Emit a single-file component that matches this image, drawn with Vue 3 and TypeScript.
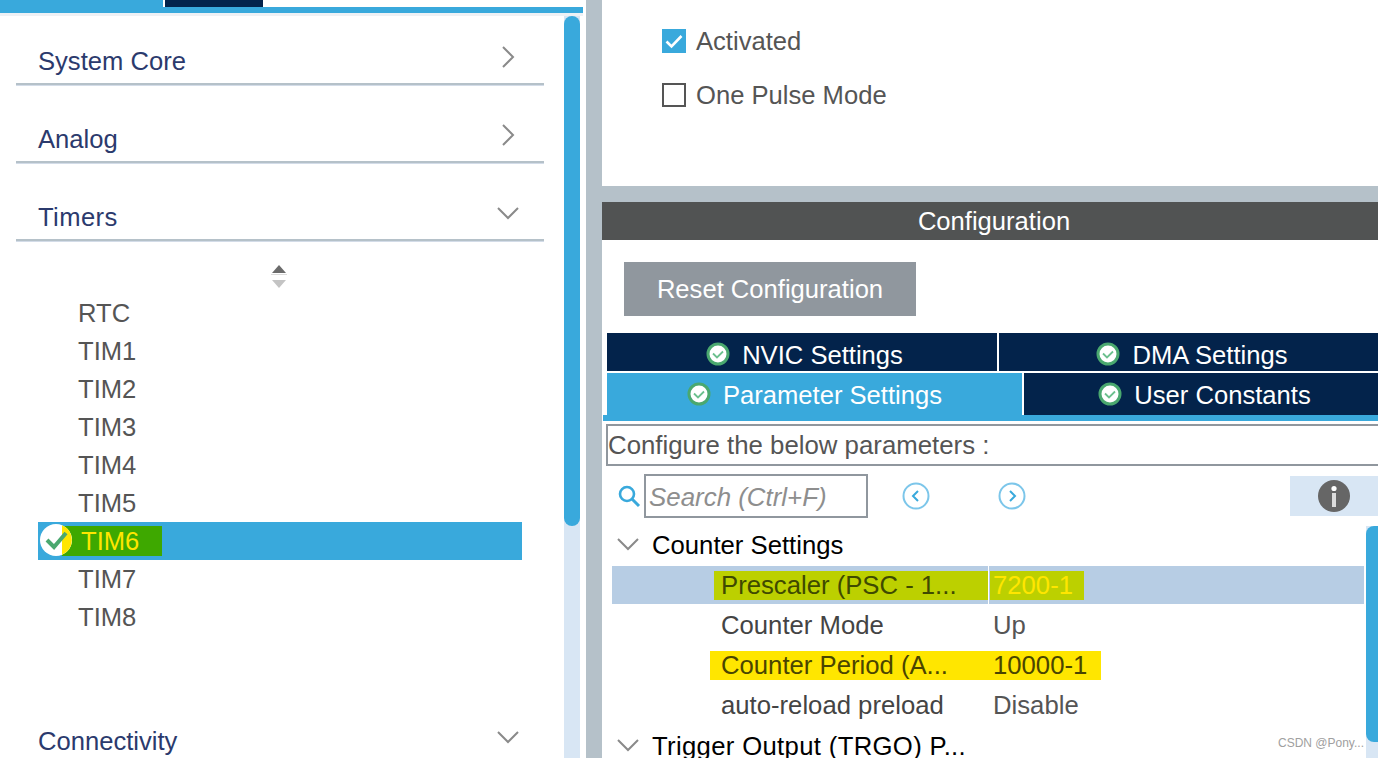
<script setup lang="ts">
const timers = ['RTC', 'TIM1', 'TIM2', 'TIM3', 'TIM4', 'TIM5', 'TIM6', 'TIM7', 'TIM8']
</script>

<template>
  <div class="page">
    <aside class="left">
      <div class="cat-tabs">
        <div class="cat-tab active"><span>Categories</span></div>
        <div class="cat-tab dark"></div>
      </div>
      <div class="cat-line"></div>
      <div class="left-body">
        <div class="list">
          <div class="section">
            <span>System Core</span>
            <svg class="chev-r" width="14" height="24" viewBox="0 0 14 24"><path d="M2 2l10 10L2 22" /></svg>
          </div>
          <div class="section">
            <span>Analog</span>
            <svg class="chev-r" width="14" height="24" viewBox="0 0 14 24"><path d="M2 2l10 10L2 22" /></svg>
          </div>
          <div class="section">
            <span class="wide">Timers</span>
            <svg class="chev-d" width="22" height="14" viewBox="0 0 22 14"><path d="M1 2l10 10L21 2" /></svg>
          </div>
          <div class="sorter">
            <svg width="18" height="24" viewBox="0 0 18 24">
              <path d="M9 0l7 8H2z" fill="#6b6b6b" />
              <path d="M1 9h16v1H1z" fill="#dcdcdc" />
              <path d="M2 15h14l-7 8z" fill="#c4c4c4" />
            </svg>
          </div>
          <ul class="items">
            <li v-for="t in timers" :key="t" :class="{ selected: t === 'TIM6' }">
              <template v-if="t === 'TIM6'">
                <svg class="sel-check" width="34" height="36" viewBox="0 0 34 36">
                  <circle cx="17" cy="18" r="16" fill="#fff" />
                  <path d="M23 3.2A16 16 0 0 1 23 32.8z" fill="#ffe600" />
                  <path d="M8 18l7 7L27 11" fill="none" stroke="#4aa86f" stroke-width="4" />
                </svg>
                <span class="sel-mark">{{ t }}</span>
              </template>
              <template v-else>{{ t }}</template>
            </li>
          </ul>
          <div class="section connectivity">
            <span>Connectivity</span>
            <svg class="chev-d" width="22" height="14" viewBox="0 0 22 14"><path d="M1 2l10 10L21 2" /></svg>
          </div>
        </div>
        <div class="scroll left-scroll"><div class="thumb"></div></div>
      </div>
    </aside>

    <div class="gutter"></div>

    <main class="right">
      <section class="mode">
        <label class="opt">
          <span class="box on">
            <svg width="24" height="24" viewBox="0 0 24 24"><path d="M4.5 12.5l5 5L19.5 7" fill="none" stroke="#fff" stroke-width="2.6" /></svg>
          </span>
          Activated
        </label>
        <label class="opt">
          <span class="box"></span>
          One Pulse Mode
        </label>
      </section>

      <div class="band"></div>
      <header class="conf-head">Configuration</header>

      <section class="conf">
        <button class="reset">Reset Configuration</button>

        <div class="tabs-row first">
          <div class="tab w1">
            <svg class="ok" width="24" height="24" viewBox="0 0 24 24"><circle cx="12" cy="12" r="10" fill="#fff" stroke="#4aa86f" stroke-width="3" /><path d="M7 11.5l4 4 6-6" fill="none" stroke="#6cc08e" stroke-width="1.8" /></svg>
            <span class="tab-text">NVIC Settings</span>
          </div>
          <div class="tab w2">
            <svg class="ok" width="24" height="24" viewBox="0 0 24 24"><circle cx="12" cy="12" r="10" fill="#fff" stroke="#4aa86f" stroke-width="3" /><path d="M7 11.5l4 4 6-6" fill="none" stroke="#6cc08e" stroke-width="1.8" /></svg>
            <span class="tab-text">DMA Settings</span>
          </div>
        </div>
        <div class="tabs-row second">
          <div class="tab w3 current">
            <svg class="ok" width="24" height="24" viewBox="0 0 24 24"><circle cx="12" cy="12" r="10" fill="#fff" stroke="#4aa86f" stroke-width="3" /><path d="M7 11.5l4 4 6-6" fill="none" stroke="#6cc08e" stroke-width="1.8" /></svg>
            <span class="tab-text">Parameter Settings</span>
          </div>
          <div class="tab w4">
            <svg class="ok" width="24" height="24" viewBox="0 0 24 24"><circle cx="12" cy="12" r="10" fill="#fff" stroke="#4aa86f" stroke-width="3" /><path d="M7 11.5l4 4 6-6" fill="none" stroke="#6cc08e" stroke-width="1.8" /></svg>
            <span class="tab-text">User Constants</span>
          </div>
        </div>
        <div class="tab-line"></div>

        <div class="hint">Configure the below parameters :</div>

        <div class="search-row">
          <svg class="lens" width="24" height="24" viewBox="0 0 24 24"><circle cx="10" cy="10" r="7" fill="none" stroke="#39a9dc" stroke-width="2.6" /><path d="M15 15l7 7" stroke="#39a9dc" stroke-width="3" /></svg>
          <div class="search">Search (Ctrl+F)</div>
          <svg class="nav prev" width="28" height="28" viewBox="0 0 28 28"><circle cx="14" cy="14" r="12.5" fill="none" stroke="#7cc6ea" stroke-width="2" /><path d="M16 9l-5 5 5 5" fill="none" stroke="#39a9dc" stroke-width="2" /></svg>
          <svg class="nav next" width="28" height="28" viewBox="0 0 28 28"><circle cx="14" cy="14" r="12.5" fill="none" stroke="#7cc6ea" stroke-width="2" /><path d="M12 9l5 5-5 5" fill="none" stroke="#39a9dc" stroke-width="2" /></svg>
          <div class="info">
            <svg width="32" height="32" viewBox="0 0 32 32"><circle cx="16" cy="16" r="16" fill="#666" /><circle cx="16" cy="8.5" r="2.6" fill="#fff" /><path d="M14 13h4v14h-4z" fill="#dcdcdc" /></svg>
          </div>
        </div>

        <div class="tree-wrap">
          <div class="tree">
            <div class="group">
              <svg class="chev-t" width="22" height="14" viewBox="0 0 22 14"><path d="M1 2l10 10L21 2" /></svg>
              Counter Settings
            </div>
            <div class="row picked">
              <div class="mark green name-mark"><span>Prescaler (PSC - 1...</span></div>
              <div class="mark green val-mark">7200-1</div>
            </div>
            <div class="row plain"><span class="name">Counter Mode</span><span class="val">Up</span></div>
            <div class="row period">
              <div class="mark yellow"><span class="name">Counter Period (A...</span><span class="val">10000-1</span></div>
            </div>
            <div class="row plain"><span class="name">auto-reload preload</span><span class="val">Disable</span></div>
            <div class="group trigger">
              <svg class="chev-t" width="22" height="14" viewBox="0 0 22 14"><path d="M1 2l10 10L21 2" /></svg>
              Trigger Output (TRGO) P...
            </div>
          </div>
          <div class="scroll tree-scroll"><div class="thumb"></div></div>
        </div>
      </section>
    </main>

    <div class="watermark">CSDN @Pony...</div>
  </div>
</template>

<style>
html, body {
  margin: 0;
  background: #fff;
}
</style>

<style scoped>
.page {
  position: relative;
  display: flex;
  width: 1378px;
  height: 758px;
  overflow: hidden;
  font-family: "Liberation Sans", Arial, sans-serif;
  font-size: 25.6px;
  color: #555;
}

/* left pane */
.left {
  width: 586px;
  flex: none;
  display: flex;
  flex-direction: column;
}
.cat-tabs {
  display: flex;
  height: 7px;
  gap: 2px;
}
.cat-tab {
  width: 163px;
  overflow: hidden;
  color: #fff;
  line-height: 0;
  text-align: center;
}
.cat-tab span {
  display: block;
  margin-top: -15px;
}
.cat-tab.active {
  background: #39a9dc;
}
.cat-tab.dark {
  width: 98px;
  background: #03234b;
}
.cat-line {
  width: 583px;
  height: 6px;
  background: #39a9dc;
  border-bottom: 3px solid #eef1f5;
}
.left-body {
  flex: 1;
  display: flex;
  min-height: 0;
}
.list {
  width: 564px;
  flex: none;
}
.section {
  display: flex;
  align-items: center;
  justify-content: space-between;
  box-sizing: border-box;
  height: 38px;
  margin: 31px 0 0 16px;
  width: 528px;
  padding: 0 28px 8px 22px;
  color: #2b3a6d;
  border-bottom: 2px solid #b5c1c9;
  box-shadow: 0 1px 0 #d3dce8;
}
.section + .section {
  margin-top: 40px;
}
.wide {
  letter-spacing: 0.4px;
}
.chev-r,
.chev-d,
.chev-t {
  fill: none;
  stroke: #8a8a8a;
  stroke-width: 2;
}
.chev-r {
  margin-right: 1px;
  margin-top: -9px;
}
.chev-d {
  margin-right: -3px;
  margin-top: -9px;
}
.sorter {
  display: flex;
  justify-content: center;
  margin-right: 6px;
  height: 24px;
  margin-top: 24px;
}
.items {
  list-style: none;
  margin: 5px 0 0;
  padding: 0;
}
.items li {
  height: 38px;
  line-height: 38px;
  padding-left: 78px;
}
.items li.selected {
  display: flex;
  align-items: center;
  width: 484px;
  margin-left: 38px;
  padding-left: 1px;
  box-sizing: border-box;
  background: #39a9dc;
}
.sel-check {
  position: relative;
  z-index: 1;
  flex: none;
  margin-top: -2px;
}
.sel-mark {
  margin-left: -11px;
  width: 100px;
  height: 30px;
  line-height: 31px;
  padding-left: 19px;
  box-sizing: border-box;
  background: #3ea800;
  color: #ffe600;
}
.section.connectivity {
  margin-top: 91px;
}
.scroll {
  background: #d8e6f4;
}
.thumb {
  background: #39a9dc;
}
.left-scroll {
  width: 16px;
  flex: none;
}
.left-scroll .thumb {
  height: 510px;
  border-radius: 8px;
}

.gutter {
  width: 16px;
  flex: none;
  background: #b5c1c9;
}

/* right pane */
.right {
  flex: 1;
  min-width: 0;
  display: flex;
  flex-direction: column;
}
.mode {
  height: 186px;
  padding: 14px 0 0 60px;
  box-sizing: border-box;
}
.opt {
  display: flex;
  align-items: center;
  height: 54px;
  gap: 10px;
}
.box {
  width: 24px;
  height: 24px;
  box-sizing: border-box;
  border: 2px solid #555;
}
.box.on {
  border: 0;
  background: #39a9dc;
}
.box svg {
  display: block;
}
.band {
  height: 16px;
  background: #b5c1c9;
}
.conf-head {
  height: 38px;
  line-height: 38px;
  text-align: center;
  padding-left: 8px;
  background: #515353;
  color: #fff;
}
.conf {
  flex: 1;
  min-height: 0;
  display: flex;
  flex-direction: column;
}
.reset {
  align-self: flex-start;
  margin: 22px 0 0 22px;
  width: 292px;
  height: 54px;
  border: 0;
  padding: 0;
  background: #90979e;
  color: #fff;
  font: inherit;
}
.tabs-row {
  display: flex;
  gap: 2px;
  margin-left: 5px;
  color: #fff;
}
.tabs-row.first {
  height: 38px;
  margin-top: 17px;
}
.tabs-row.first .tab {
  box-sizing: border-box;
  padding-top: 4px;
}
.tab-text {
  position: relative;
  top: 1px;
}
.tabs-row.second {
  height: 42px;
  margin-top: 2px;
}
.tab {
  display: flex;
  align-items: center;
  justify-content: center;
  gap: 12px;
  padding-left: 5px;
  background: #03234b;
}
.w1 { width: 390px; }
.w2 { flex: 1; padding-left: 7px; }
.w3 { width: 415px; }
.w4 { flex: 1; padding-left: 7px; }
.tab.current {
  background: #39a9dc;
  height: 48px;
  position: relative;
  z-index: 1;
  padding: 0 0 6px;
  box-sizing: border-box;
}
.ok {
  flex: none;
}
.tab-line {
  height: 6px;
  margin-left: 1px;
  background: #39a9dc;
}
.hint {
  height: 42px;
  line-height: 38px;
  margin: 3px 0 0 4px;
  box-sizing: border-box;
  border: 2px solid #90979e;
  border-right: 0;
  font-size: 25.8px;
}
.search-row {
  display: flex;
  align-items: center;
  height: 44px;
  margin-top: 8px;
}
.lens {
  margin-left: 15px;
  flex: none;
}
.search {
  margin-left: 3px;
  width: 224px;
  height: 44px;
  line-height: 42px;
  box-sizing: border-box;
  border: 2px solid #90979e;
  padding-left: 3px;
  color: #8e8e8e;
  font-style: italic;
  font-size: 25.9px;
}
.nav {
  flex: none;
}
.prev {
  margin-left: 34px;
}
.next {
  margin-left: 68px;
}
.info {
  margin-left: 264px;
  width: 88px;
  height: 40px;
  display: flex;
  align-items: center;
  justify-content: center;
  background: #d8e6f4;
}
.tree-wrap {
  flex: 1;
  min-height: 0;
  display: flex;
  margin-top: 6px;
}
.tree {
  flex: 1;
  min-width: 0;
  padding-left: 10px;
  color: #000;
  font-size: 25.7px;
}
.group {
  display: flex;
  align-items: center;
  height: 40px;
  margin-top: 1px;
  white-space: nowrap;
}
.trigger {
  letter-spacing: 0.33px;
}
.chev-t {
  margin: -2px 13px 0 5px;
}
.row {
  display: flex;
  align-items: center;
  height: 40px;
  color: #444;
}
.plain {
  padding-left: 109px;
}
.name {
  width: 272px;
  flex: none;
}
.val {
  color: #555;
}
.picked {
  height: 38px;
  margin: 1px 2px 1px 0;
  background: #b7cde4;
}
.mark {
  height: 29px;
  line-height: 29px;
  display: flex;
}
.green {
  background: #bcd000;
  color: #3f4a00;
}
.name-mark {
  margin-left: 102px;
  width: 275px;
  padding-left: 7px;
  box-sizing: border-box;
}
.val-mark {
  order: 2;
  margin-left: 1px;
  width: 94px;
  padding-left: 3px;
  box-sizing: border-box;
  color: #ffe600;
}
.picked::before {
  content: "";
  order: 1;
  width: 1px;
  height: 38px;
  margin-left: -1px;
  background: #fff;
}
.period {
  padding-left: 98px;
}
.yellow {
  width: 391px;
  padding-left: 11px;
  box-sizing: border-box;
  background: #ffe600;
  color: #4a4500;
}
.period .val {
  color: #4a4500;
}
.tree-scroll {
  width: 12px;
  flex: none;
  margin-top: 2px;
}
.tree-scroll .thumb {
  height: 216px;
  border-radius: 8px 0 0 8px;
}

.watermark {
  position: absolute;
  left: 1278px;
  top: 736px;
  font-size: 12px;
  color: #a0a0a0;
}
</style>
